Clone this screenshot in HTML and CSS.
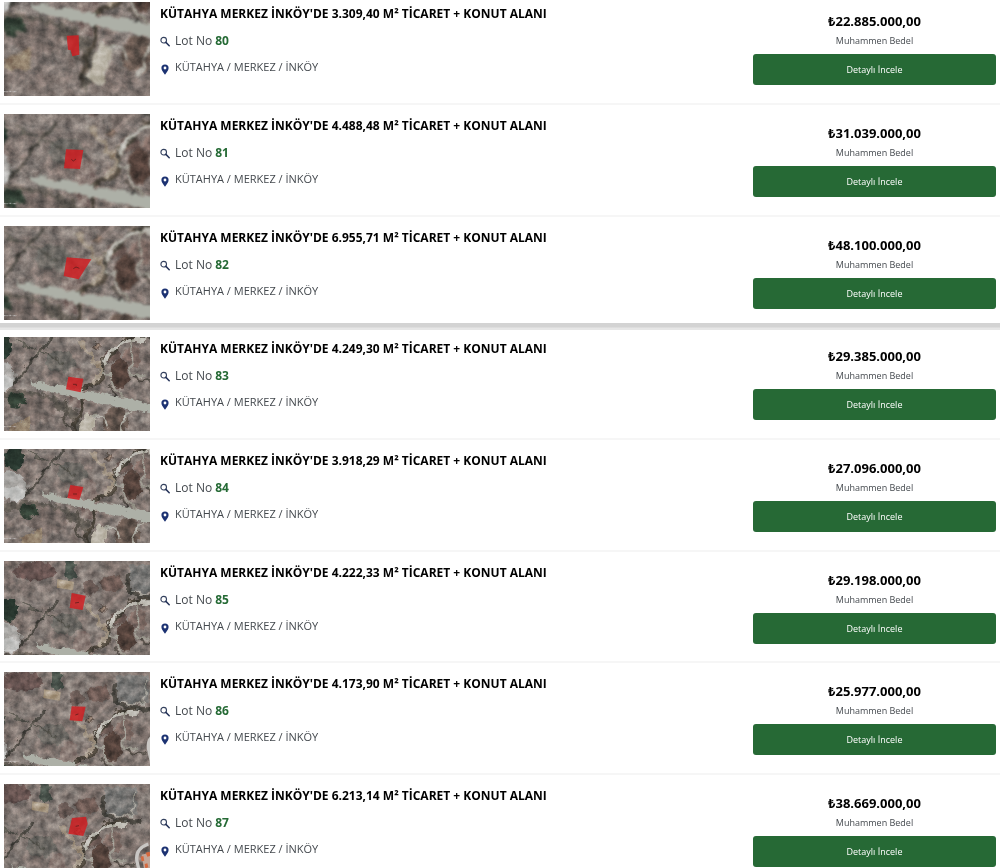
FILE: index.html
```html
<!DOCTYPE html>
<html lang="tr">
<head>
<meta charset="utf-8">
<meta name="viewport" content="width=device-width, initial-scale=1">
<title>Lot Listesi</title>
<link rel="stylesheet" href="styles.css">
</head>
<body>
<svg class="sprite" aria-hidden="true">
  <defs>
    <filter id="rough" filterUnits="userSpaceOnUse" x="-450" y="-300" width="800" height="800" color-interpolation-filters="sRGB">
      <feTurbulence type="fractalNoise" baseFrequency="0.045" numOctaves="4" seed="4" result="n"/>
      <feDisplacementMap in="SourceGraphic" in2="n" scale="26" xChannelSelector="R" yChannelSelector="G"/>
      <feGaussianBlur stdDeviation="2"/>
    </filter>
    <filter id="grain" filterUnits="userSpaceOnUse" x="-450" y="-300" width="800" height="800" color-interpolation-filters="sRGB">
      <feTurbulence type="fractalNoise" baseFrequency="0.043" numOctaves="5" seed="11"/>
      <feColorMatrix values="1.1 0 0 0 -0.05  1.04 .06 0 0 -0.05  1.02 .08 0 0 -0.05  0 0 0 0 1"/>
    </filter>
    <filter id="tint" filterUnits="userSpaceOnUse" x="-450" y="-300" width="800" height="800" color-interpolation-filters="sRGB">
      <feTurbulence type="fractalNoise" baseFrequency="0.012" numOctaves="2" seed="7"/>
      <feColorMatrix values="0 0 0 0 .40  0 0 0 0 .33  0 0 0 0 .31  0 2.5 0 0 -1"/>
    </filter>
    <g id="terrain">
      <rect x="-450" y="-300" width="800" height="800" fill="#847b76"/>
      <rect x="-450" y="-300" width="800" height="800" filter="url(#tint)" opacity=".35"/>
      <g filter="url(#rough)" fill="none" stroke-linecap="round">
        <ellipse cx="-205" cy="-112" rx="65" ry="28" fill="#665350"/>
        <ellipse cx="25" cy="-75" rx="35" ry="25" fill="#6d5a54"/>
        <ellipse cx="-40" cy="-60" rx="22" ry="20" fill="#695a55"/>
        <rect x="80" y="-130" width="95" height="82" fill="#777674"/>
        <path d="M75-100Q66-50 100-38T190-28" stroke="#4a4741" stroke-width="13"/>
        <path d="M90-52Q120-38 162-46L168-110" stroke="#a5a29a" stroke-width="5"/>
        <path d="M-100-150V-100" stroke="#475049" stroke-width="28"/>
        <ellipse cx="-110" cy="45" rx="45" ry="32" fill="#6b6863"/>
        <ellipse cx="-60" cy="130" rx="32" ry="60" fill="#8b7c76"/>
        <path d="M-316 150Q-200 130-110 180T-70 300" stroke="#625c55" stroke-width="24"/>
        <ellipse cx="-190" cy="190" rx="62" ry="40" fill="#756a65"/>
        <ellipse cx="67" cy="83" rx="30" ry="44" fill="#56443d"/>
        <ellipse cx="48" cy="28" rx="27" ry="18" fill="#665651"/>
        <ellipse cx="105" cy="35" rx="25" ry="30" fill="#75645e"/>
        <ellipse cx="55" cy="230" rx="38" ry="43" fill="#65574f"/>
        <path d="M-138-25Q-155 3-180 25T-218 72-248 112" stroke="#4c4943" stroke-width="9"/>
        <path d="M-240-15Q-205 15-185 5M-180 20Q-130 20-108 58" stroke="#56544d" stroke-width="6"/>
        <path d="M130-25Q85-30 64 0T27 35 16 76-18 117-49 155-55 210-78 290" stroke="#484239" stroke-width="12"/>
        <path d="M-100 160Q-82 210-103 215L-78 250" stroke="#544f48" stroke-width="8"/>
        <path d="M-50-8Q-30 15-8 45L13 78-13 115" stroke="#a29585" stroke-width="11"/>
        <path d="M142-19Q100-20 75-8T34 23L18 55" stroke="#bfbdb5" stroke-width="10"/>
        <path d="M15 85Q50 70 45 120L76 155 90 185M105-20Q98 40 105 88L145 92" stroke="#9c998f" stroke-width="6"/>
        <path d="M110 95Q140 115 165 99M35 120L58 155" stroke="#4f4a44" stroke-width="7"/>
        <path d="M-35 205Q-57 245-65 295L-25 300-13 250-5 220Z" fill="#bab4a7"/>
        <path d="M-12 215Q25 195 31 242M102 188Q75 230 58 280" stroke="#a9a79e" stroke-width="7"/>
        <ellipse cx="-295" cy="88" rx="50" ry="45" fill="#a7a5a2"/>
        <ellipse cx="-288" cy="110" rx="40" ry="20" fill="#bdbdbb"/>
        <ellipse cx="-285" cy="3" rx="32" ry="35" fill="#28362e"/>
        <ellipse cx="-243" cy="163" rx="27" ry="20" fill="#344136"/>
        <path d="M-205 218L-270 239-250 270-200 265Z" fill="#93836f"/>
        <ellipse cx="0" cy="1" rx="11" ry="11" fill="#8b786b" stroke="#564b44" stroke-width="4"/>
      </g>
      <path d="M-138-88L-88-80-91-54-140-62Z" fill="#a5957f"/>
      <rect x="-450" y="-300" width="800" height="800" filter="url(#grain)" class="grain"/>
      <path filter="url(#rough)" d="M-206 104L-100 122 30 148 200 184V210L80 188-60 156-178 132Z" fill="#adb0a7"/>
      <path d="M210 40Q165 56 178 101L190 155" fill="none" stroke="#c9c7c4" stroke-width="10"/>
      <path d="M190 72L218 65V130L198 120Z" fill="#c3a697"/>
      <path d="M187 78l8-2 3 14-8 2zM202 66l12-3 2 13-9 2zM199 100l8-2 3 12-9 3z" fill="#d5693f"/>
    </g>
    <g id="credit" fill="none" stroke="#ddd" stroke-width="3" opacity=".65">
      <path d="M0 269H11M14 268H23M26 269H37" stroke-dasharray="3 1"/>
    </g>
    <symbol id="search" viewBox="0 0 10 10"><circle cx="3.7" cy="3.7" r="2.8" fill="none" stroke="#34415e" stroke-width="1.1"/><path d="M5.9 5.9L9.2 9.2" stroke="#26345a" stroke-width="1.5" stroke-linecap="round"/></symbol>
    <symbol id="pin" viewBox="0 0 8 11"><path fill="#1c3272" fill-rule="evenodd" d="M4 .4A3.6 3.6 0 0 0 .4 4C.4 6.2 2.3 8.3 4 10.7 5.7 8.3 7.6 6.2 7.6 4A3.6 3.6 0 0 0 4 .4ZM4 2.6A1.4 1.4 0 1 1 4 5.4 1.4 1.4 0 0 1 4 2.6Z"/></symbol>
  </defs>
</svg>

<main>
<ul class="lots">
  <li class="lot">
    <svg class="thumb" viewBox="0 0 438 282" preserveAspectRatio="xMidYMid slice" role="img" aria-label="Lot 80 uydu görüntüsü"><use href="#terrain" transform="translate(332 -130) scale(1.25)"/><path class="parcel" d="M188 101L224 100 226 158 205 163 200 145 192 143Z"/><use href="#credit"/></svg>
    <div class="info">
      <h2>KÜTAHYA MERKEZ İNKÖY'DE 3.309,40 M² TİCARET + KONUT ALANI</h2>
      <p class="line"><svg class="icon"><use href="#search"/></svg><span>Lot No <b>80</b></span></p>
      <p class="line place"><svg class="icon"><use href="#pin"/></svg><span>KÜTAHYA / MERKEZ / İNKÖY</span></p>
    </div>
    <div class="offer"><strong>₺22.885.000,00</strong><small>Muhammen Bedel</small><button type="button">Detaylı İncele</button></div>
  </li>
  <li class="lot">
    <svg class="thumb" viewBox="0 0 438 282" preserveAspectRatio="xMidYMid slice" role="img" aria-label="Lot 81 uydu görüntüsü"><use href="#terrain" transform="translate(323 54) scale(1.22)"/><path class="parcel" d="M186 106L238 108 228 165 180 163Z"/><path class="mark" d="M202 136l6 5 8-6"/><use href="#credit"/></svg>
    <div class="info">
      <h2>KÜTAHYA MERKEZ İNKÖY'DE 4.488,48 M² TİCARET + KONUT ALANI</h2>
      <p class="line"><svg class="icon"><use href="#search"/></svg><span>Lot No <b>81</b></span></p>
      <p class="line place"><svg class="icon"><use href="#pin"/></svg><span>KÜTAHYA / MERKEZ / İNKÖY</span></p>
    </div>
    <div class="offer"><strong>₺31.039.000,00</strong><small>Muhammen Bedel</small><button type="button">Detaylı İncele</button></div>
  </li>
  <li class="lot">
    <svg class="thumb" viewBox="0 0 438 282" preserveAspectRatio="xMidYMid slice" role="img" aria-label="Lot 82 uydu görüntüsü"><use href="#terrain" transform="translate(283 37) scale(1.22)"/><path class="parcel" d="M188 94L262 100 224 160 179 150Z"/><path class="mark" d="M208 128l8-5 10 4"/><use href="#credit"/></svg>
    <div class="info">
      <h2>KÜTAHYA MERKEZ İNKÖY'DE 6.955,71 M² TİCARET + KONUT ALANI</h2>
      <p class="line"><svg class="icon"><use href="#search"/></svg><span>Lot No <b>82</b></span></p>
      <p class="line place"><svg class="icon"><use href="#pin"/></svg><span>KÜTAHYA / MERKEZ / İNKÖY</span></p>
    </div>
    <div class="offer"><strong>₺48.100.000,00</strong><small>Muhammen Bedel</small><button type="button">Detaylı İncele</button></div>
  </li>
  <li class="lot seam">
    <svg class="thumb" viewBox="0 0 438 282" preserveAspectRatio="xMidYMid slice" role="img" aria-label="Lot 83 uydu görüntüsü"><use href="#terrain" transform="translate(280 26)"/><path class="parcel" d="M193 119L238 125 230 166 186 157Z"/><path class="mark" d="M207 142h10v5"/><use href="#credit"/></svg>
    <div class="info">
      <h2>KÜTAHYA MERKEZ İNKÖY'DE 4.249,30 M² TİCARET + KONUT ALANI</h2>
      <p class="line"><svg class="icon"><use href="#search"/></svg><span>Lot No <b>83</b></span></p>
      <p class="line place"><svg class="icon"><use href="#pin"/></svg><span>KÜTAHYA / MERKEZ / İNKÖY</span></p>
    </div>
    <div class="offer"><strong>₺29.385.000,00</strong><small>Muhammen Bedel</small><button type="button">Detaylı İncele</button></div>
  </li>
  <li class="lot">
    <svg class="thumb" viewBox="0 0 438 282" preserveAspectRatio="xMidYMid slice" role="img" aria-label="Lot 84 uydu görüntüsü"><use href="#terrain" transform="translate(316 24)"/><path class="parcel" d="M199 108L238 114 226 153 190 147Z"/><path class="mark" d="M207 135h12"/><use href="#credit"/></svg>
    <div class="info">
      <h2>KÜTAHYA MERKEZ İNKÖY'DE 3.918,29 M² TİCARET + KONUT ALANI</h2>
      <p class="line"><svg class="icon"><use href="#search"/></svg><span>Lot No <b>84</b></span></p>
      <p class="line place"><svg class="icon"><use href="#pin"/></svg><span>KÜTAHYA / MERKEZ / İNKÖY</span></p>
    </div>
    <div class="offer"><strong>₺27.096.000,00</strong><small>Muhammen Bedel</small><button type="button">Detaylı İncele</button></div>
  </li>
  <li class="lot">
    <svg class="thumb" viewBox="0 0 438 282" preserveAspectRatio="xMidYMid slice" role="img" aria-label="Lot 85 uydu görüntüsü"><use href="#terrain" transform="translate(298 142)"/><path class="parcel" d="M203 96L245 104 236 147 197 141Z"/><path class="mark" d="M213 126l12-2"/><use href="#credit"/></svg>
    <div class="info">
      <h2>KÜTAHYA MERKEZ İNKÖY'DE 4.222,33 M² TİCARET + KONUT ALANI</h2>
      <p class="line"><svg class="icon"><use href="#search"/></svg><span>Lot No <b>85</b></span></p>
      <p class="line place"><svg class="icon"><use href="#pin"/></svg><span>KÜTAHYA / MERKEZ / İNKÖY</span></p>
    </div>
    <div class="offer"><strong>₺29.198.000,00</strong><small>Muhammen Bedel</small><button type="button">Detaylı İncele</button></div>
  </li>
  <li class="lot">
    <svg class="thumb" viewBox="0 0 438 282" preserveAspectRatio="xMidYMid slice" role="img" aria-label="Lot 86 uydu görüntüsü"><use href="#terrain" transform="translate(258 140)"/><path class="parcel" d="M203 103L245 104 235 148 197 145Z"/><path class="mark" d="M214 129l9-3"/><use href="#credit"/></svg>
    <div class="info">
      <h2>KÜTAHYA MERKEZ İNKÖY'DE 4.173,90 M² TİCARET + KONUT ALANI</h2>
      <p class="line"><svg class="icon"><use href="#search"/></svg><span>Lot No <b>86</b></span></p>
      <p class="line place"><svg class="icon"><use href="#pin"/></svg><span>KÜTAHYA / MERKEZ / İNKÖY</span></p>
    </div>
    <div class="offer"><strong>₺25.977.000,00</strong><small>Muhammen Bedel</small><button type="button">Detaylı İncele</button></div>
  </li>
  <li class="lot">
    <svg class="thumb" viewBox="0 0 438 282" preserveAspectRatio="xMidYMid slice" role="img" aria-label="Lot 87 uydu görüntüsü"><use href="#terrain" transform="translate(223 140)"/><path class="parcel" d="M204 102L246 98 251 119 238 156 193 149Z"/><path class="mark" d="M215 127l10-2"/><use href="#credit"/></svg>
    <div class="info">
      <h2>KÜTAHYA MERKEZ İNKÖY'DE 6.213,14 M² TİCARET + KONUT ALANI</h2>
      <p class="line"><svg class="icon"><use href="#search"/></svg><span>Lot No <b>87</b></span></p>
      <p class="line place"><svg class="icon"><use href="#pin"/></svg><span>KÜTAHYA / MERKEZ / İNKÖY</span></p>
    </div>
    <div class="offer"><strong>₺38.669.000,00</strong><small>Muhammen Bedel</small><button type="button">Detaylı İncele</button></div>
  </li>
</ul>
</main>
</body>
</html>
```

FILE: styles.css
```css
* { box-sizing: border-box; }

body {
  margin: 0;
  background: #fff;
  color: #44494e;
  font-family: "Open Sans", "Noto Sans", sans-serif;
  font-size: 12px;
}

main {
  height: 100vh;
  overflow: hidden;
}

.sprite {
  position: absolute;
  width: 0;
  height: 0;
}

.grain { mix-blend-mode: overlay; opacity: .45; }

.lots {
  display: grid;
  grid-template-rows: 105px;
  grid-auto-rows: 112px 111px 112px;
  margin: 0;
  padding: 0;
  list-style: none;
}

.lot {
  display: flex;
  align-items: flex-start;
  padding: 9px 4px 0;
  border-bottom: 2px solid #f6f6f6;
}

.lot:first-child { padding-top: 2px; }

.seam { position: relative; }

.seam::before {
  content: "";
  position: absolute;
  top: -5px;
  left: 0;
  right: 0;
  height: 7px;
  background: linear-gradient(#d3d3d3 0 4px, #e6e6e6 5px 7px);
}

.thumb {
  flex: none;
  width: 146px;
  height: 94px;
  overflow: hidden;
  isolation: isolate;
}

.parcel { fill: #cf1f22; fill-opacity: .85; }

.mark {
  fill: none;
  stroke: #74201f;
  stroke-width: 3;
}

.info {
  flex: 1;
  min-width: 0;
  padding-left: 10px;
}

h2 {
  margin: 0 0 7px;
  color: #000;
  font-size: 12px;
  font-weight: 700;
  line-height: 23px;
}

.line {
  display: flex;
  align-items: center;
  gap: 5px;
  margin: 0 0 8px;
  line-height: 18px;
}

.line b { color: #256a35; }

.place { font-size: 11px; }

.icon {
  flex: none;
  width: 10px;
  height: 11px;
}

.place .icon { margin-top: 4px; }

.offer {
  display: flex;
  flex-direction: column;
  align-items: stretch;
  width: 25%;
  padding: 10px 0 0 5px;
  text-align: center;
}

.offer strong {
  color: #000;
  font-size: 13px;
  line-height: 19px;
}

.offer small {
  font-size: 9px;
  line-height: 19px;
}

.offer button {
  height: 31px;
  margin-top: 4px;
  padding: 0;
  border: 0;
  border-radius: 3px;
  background: #266935;
  color: #fff;
  font: 9px "Open Sans", "Noto Sans", sans-serif;
}
```
